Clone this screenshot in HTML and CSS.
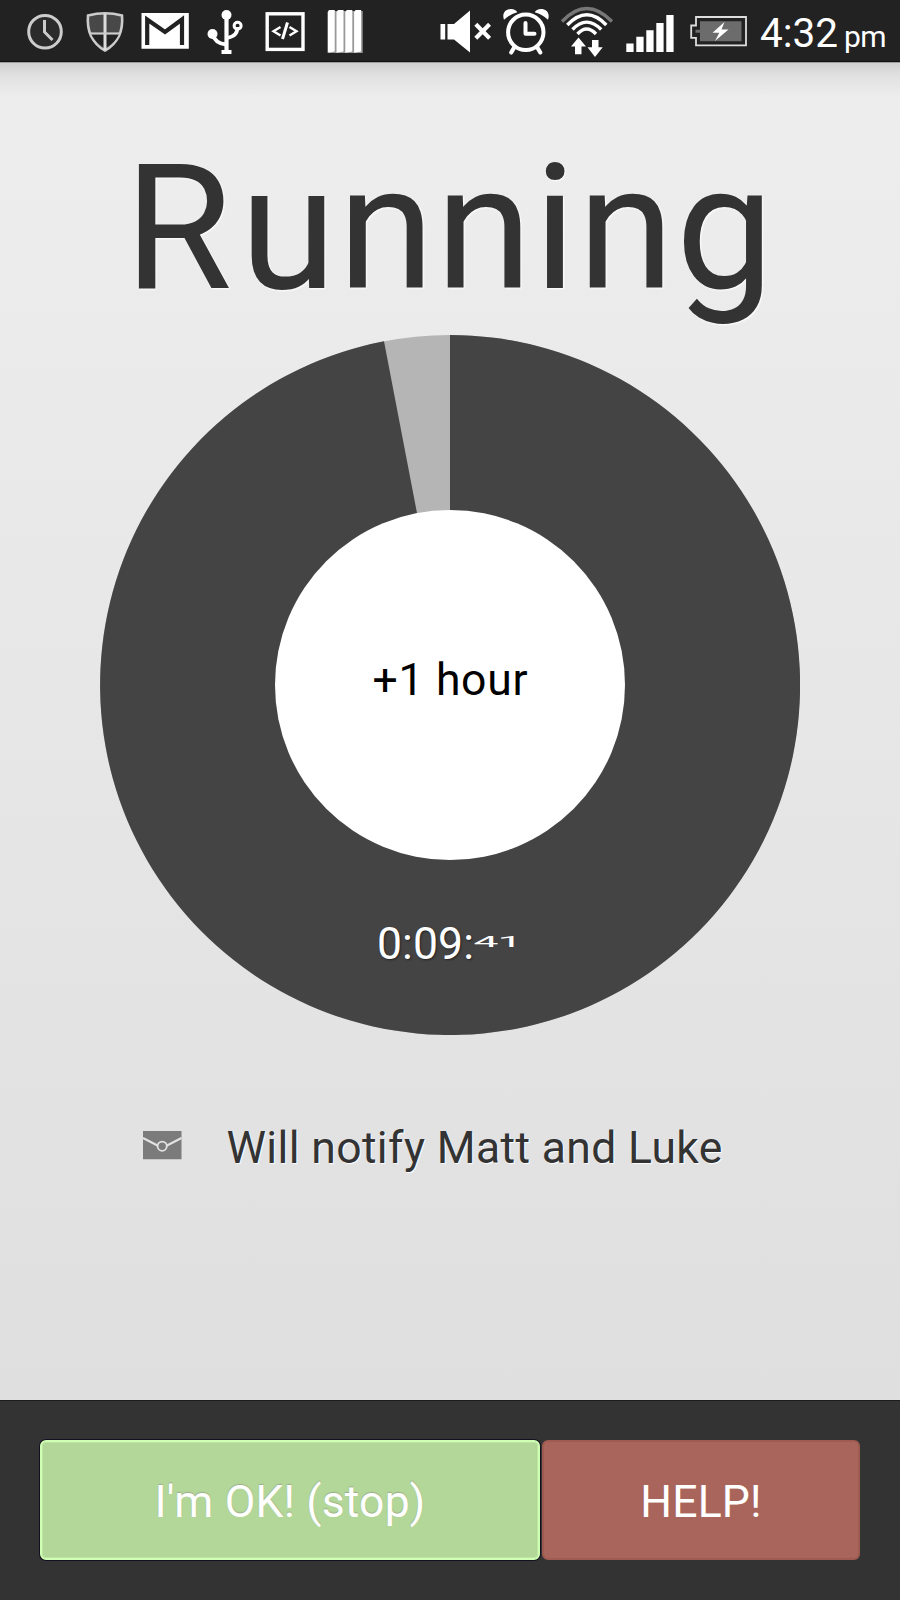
FILE: index.html
```html
<!DOCTYPE html>
<html lang="en">
<head>
<meta charset="utf-8">
<title>Running</title>
<link rel="stylesheet" href="styles.css">
</head>
<body>
<div class="screen">
  <header class="status">
    <div class="status-left">
      <svg class="icon soft" width="38" height="62" viewBox="26 0 38 62"><circle cx="45" cy="31.7" r="16.3" fill="#2b2b2b" stroke="#ccc" stroke-width="3"/><path d="M44.5 20v12l8 8" fill="none" stroke="#ccc" stroke-width="3"/></svg>
      <svg class="icon shield soft" width="40" height="62" viewBox="85 0 40 62"><path d="M88 15.500Q105 11 122 15.500Q123 27 119 36Q114 46 105 50.500Q96 46 91 36Q87 27 88 15.500Z" fill="#484848" stroke="#ccc" stroke-width="2.600"/><path d="M91 34H104V47Q96 43 91 34ZM106 34H119Q115 43 106 47Z" fill="#222"/><path d="M105 14v36" stroke="#ddd" stroke-width="3"/><path d="M90 33.500h30" stroke="#ccc" stroke-width="2.200"/></svg>
      <svg class="icon gmail" width="48" height="62" viewBox="141 0 48 62"><path d="M141.500 13h47.300v35.700h-47.300z" fill="#fff"/><path d="M147.200 45V19.500L165 32L182 19.500V45" fill="none" stroke="#222" stroke-width="4.200"/></svg>
      <svg class="icon usb" width="38" height="62" viewBox="206 0 38 62"><g fill="none" stroke="#fff" stroke-width="4.200"><path d="M226.500 15v36"/><path d="M212.500 34Q215 43.500 226 44.500" stroke-width="3.800"/><path d="M237.500 27Q238 36 227 38" stroke-width="3.400"/><circle cx="237.600" cy="25.800" r="3.500" stroke-width="3"/></g><circle cx="226.500" cy="15" r="5" fill="#fff"/><circle cx="212.500" cy="34" r="5" fill="#fff"/><path d="M221.500 50h10v4h-10z" fill="#fff"/></svg>
      <svg class="icon code" width="40" height="62" viewBox="265 0 40 62"><rect x="267.200" y="13.800" width="35.800" height="35.600" fill="none" stroke="#fff" stroke-width="3.400"/><path d="M280.500 27L273.500 31.300L280.500 35.600M289.500 27L296.500 31.300L289.500 35.600" fill="none" stroke="#fff" stroke-width="2.400"/><path d="M287.500 22.500L282.500 39" stroke="#fff" stroke-width="3"/></svg>
      <svg class="icon stripes" width="37" height="62" viewBox="327 0 37 62"><path d="M329 11h33.700v42H329z" fill="#999"/><path d="M329 10h5.700v41.500l-7 1.300V12zM338 10h5.500v41.500l-7 1.300V12zM346.800 10h5.500v41.500l-7 1.300V12zM355.600 10h5.500v41.500l-7 1.300V12z" fill="#fff"/></svg>
    </div>
    <div class="status-right">
      <svg class="icon" width="51" height="62" viewBox="440 0 51 62"><path d="M440.500 24h4.700v15.500h-4.700zM447.500 24h6.500L470 10.500v42L454 39.500h-6.500z" fill="#fff"/><path d="M475.800 24.300l13.800 14M489.600 24.300l-13.800 14" stroke="#fff" stroke-width="4.200"/></svg>
      <svg class="icon alarm" width="47" height="62" viewBox="502 0 47 62"><circle cx="525.800" cy="32.300" r="17.700" fill="none" stroke="#fff" stroke-width="4"/><path d="M504 19.800C501.500 13 506 9 511 9C514 9 516.500 10.300 517.300 12.300Q509.500 14.500 504 19.800zM548 19.800C550.500 13 546 9 541 9C538 9 535.500 10.300 534.700 12.300Q542.500 14.500 548 19.800z" fill="#fff"/><path d="M525.500 23v10.800h9" fill="none" stroke="#fff" stroke-width="4" stroke-linejoin="round" stroke-linecap="round"/><path d="M514.500 47l-3.300 5.500M537 47l3.300 5.500" stroke="#fff" stroke-width="4.200" stroke-linecap="round"/></svg>
      <svg class="icon wifi" width="54" height="62" viewBox="560 0 54 62"><g fill="none" stroke="#fff" stroke-width="3.400"><path d="M577.500 34q9-10 18.500 0"/><path d="M572.500 29.500q14-14.800 28.700 0"/><path d="M567.300 25q19.500-20.500 39 0"/><path d="M562 21.500q24.500-26 50 0" stroke="#777"/></g><path d="M578.500 37.500l7.500 9h-4.500v7.700h-6.500v-7.700H571zM592 40h6.500v7.300h4.200L595 57l-7.500-9.700h4.500z" fill="#fff"/></svg>
      <svg class="icon signal" width="48" height="62" viewBox="626 0 48 62"><path d="M626.300 43.500h7.300V52h-7.300zM636.300 36.700h7.300V52h-7.300zM646.300 30.200h7.300V52h-7.300zM656.300 23h7.300v29h-7.300zM666.300 15h7.300v37h-7.300z" fill="#fff"/></svg>
      <svg class="icon battery" width="57" height="62" viewBox="690 0 57 62"><path d="M696 17h50v28.300h-50v-7.500h-4.800V25.500H696z" fill="none" stroke="#ddd" stroke-width="1.800"/><path d="M700 21.300h41.500v20H700v-8.500h-4.500v-3h4.500z" fill="#6c6c6c"/><path d="M724.500 22l-12 10.700h6.800L715 41l13.500-11.500h-7z" fill="#fff"/></svg>
      <div class="clock"><span class="time">4:32</span><span class="ampm">pm</span></div>
    </div>
  </header>
  <main class="content">
    <h1 class="title"><span class="initial">R</span>unning</h1>
    <svg class="dial" width="700" height="700" viewBox="100 335 700 700">
      <circle cx="450" cy="685" r="350" fill="#b5b5b5"/>
      <path d="M450 685V335A350 350 0 1 1 384 341.300Z" fill="#444"/>
      <circle cx="450" cy="685" r="175" fill="#fff"/>
      <text class="dial-text" x="372.500" y="695.400" textLength="155" fill="#000">+1 hour</text>
      <text class="dial-text timer" x="377" y="959" textLength="97" fill="#fff">0:09:</text>
      <text class="dial-text" transform="translate(473.500 947) scale(1 .32)" textLength="49" fill="#fff">41</text>
    </svg>
    <div class="notify">
      <svg class="envelope" width="39" height="29" viewBox="0 0 39 29"><path d="M0 0h38.500v28.300H0z" fill="#7b7b7b"/><path d="M0 7l14.500 7.500M38.500 7L24 14.500" stroke="#e2e2e2" stroke-width="2.200"/><circle cx="19.200" cy="15.200" r="4.600" fill="#7b7b7b" stroke="#e2e2e2" stroke-width="1.800"/></svg>
      <span class="notify-text">Will notify Matt and Luke</span>
    </div>
  </main>
  <footer class="actions">
    <button class="btn ok">I'm OK! (stop)</button>
    <button class="btn help">HELP!</button>
  </footer>
</div>
</body>
</html>
```
FILE: styles.css
```css
* { box-sizing: border-box; }
body { margin: 0; font-family: Roboto, sans-serif; }
.screen {
  width: 900px;
  height: 1600px;
  display: flex;
  flex-direction: column;
  overflow: hidden;
}
.status {
  height: 62px;
  flex: none;
  display: flex;
  justify-content: space-between;
  background: #222;
  border-bottom: 1px solid #111;
  color: #fff;
}
.status-left { display: flex; padding-left: 26px; }
.status-right { display: flex; padding-right: 14px; }
.icon { display: block; flex: none; }
.soft { filter: blur(.4px); }
.shield { margin-left: 21px; }
.gmail { margin-left: 16px; }
.usb { margin-left: 17px; }
.code { margin-left: 21px; }
.stripes { margin-left: 22px; }
.alarm { margin-left: 11px; }
.wifi { margin-left: 11px; }
.signal { margin-left: 12px; }
.battery { margin-left: 16px; }
.clock {
  width: 126px;
  margin-left: 13px;
  display: flex;
  align-items: baseline;
  line-height: 66px;
  white-space: nowrap;
}
.time { width: 84px; font-size: 40.500px; }
.ampm { font-size: 30px; letter-spacing: -.7px; }
.content {
  flex: 1;
  display: flex;
  flex-direction: column;
  align-items: center;
  padding-top: 65px;
  background:
    linear-gradient(#9e9e9e, #9e9e9e) 0 0 / 100% 1px no-repeat,
    linear-gradient(rgba(0, 0, 0, .13), rgba(0, 0, 0, .055) 14px, transparent 36px),
    linear-gradient(#eee, #dfdfdf);
}
.title {
  margin: 0 0 5px;
  height: 203px;
  line-height: 203px;
  font-size: 174.500px;
  font-weight: 400;
  letter-spacing: 1.6px;
  color: #333;
  text-shadow: 1px 1px 2px #fff;
}
.initial { letter-spacing: 8px; }
.dial { display: block; flex: none; }
.dial-text { font-size: 44.500px; }
.timer { text-shadow: 1px 1px 2px #222; }
.notify {
  width: 615px;
  height: 60px;
  margin-top: 83px;
  display: flex;
  align-items: center;
  gap: 45px;
}
.envelope { flex: none; margin-bottom: 6px; }
.notify-text {
  font-size: 44.500px;
  line-height: 60px;
  letter-spacing: .36px;
  white-space: nowrap;
  color: #333;
  text-shadow: 1px 1px 1px #fff;
}
.actions {
  height: 200px;
  flex: none;
  display: flex;
  gap: 2px;
  padding: 39px 40px 40px;
  background: #333;
  border-top: 1px solid #1c1c1c;
}
.btn {
  height: 120px;
  padding: 4px 0 0;
  border-radius: 6px;
  font: 400 44.500px/52px Roboto, sans-serif;
  letter-spacing: .15px;
  color: #fff;
}
.ok {
  width: 500px;
  background: #b3d699;
  border: 2px solid #ceffb3;
  box-shadow: 0 0 0 1px #151020, inset 0 0 0 1px #bce6a2;
  text-shadow: 0 -1px 1px #9aae8a;
}
.help {
  width: 318px;
  background: #a9655b;
  border: 2px solid #9f5b52;
}
```
